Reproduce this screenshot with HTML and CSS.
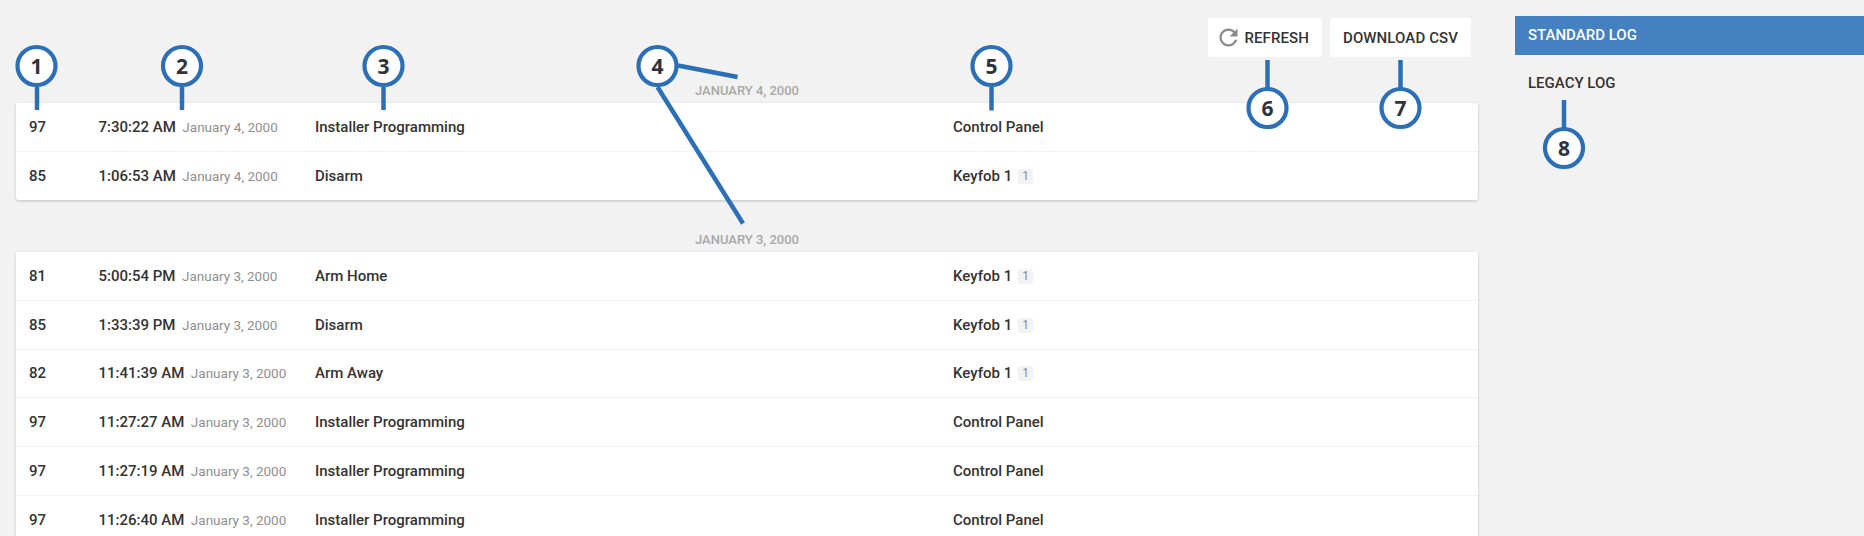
FILE: index.html
```html
<!DOCTYPE html>
<html lang="en">
<head>
<meta charset="utf-8">
<title>Event Log</title>
<link rel="stylesheet" href="styles.css">
</head>
<body>
<div class="page">
  <main class="main">
    <div class="toolbar">
      <button class="btn" type="button">
        <svg class="btn-icon" viewBox="0 0 24 24" aria-hidden="true"><path d="M17.65 6.35C16.2 4.9 14.21 4 12 4c-4.42 0-7.99 3.58-7.99 8s3.57 8 7.99 8c3.73 0 6.84-2.55 7.73-6h-2.08c-.82 2.33-3.04 4-5.65 4-3.31 0-6-2.69-6-6s2.69-6 6-6c1.66 0 3.14.69 4.22 1.78L13 11h7V4l-2.35 2.35z"/></svg>
        Refresh
      </button>
      <button class="btn" type="button">Download CSV</button>
    </div>

    <h2 class="day day-first">January 4, 2000</h2>
    <section class="card">
      <div class="row"><span>97</span><span class="when"><span>7:30:22 AM</span><span class="date">January 4, 2000</span></span><span>Installer Programming</span><span class="source">Control Panel</span></div>
      <div class="row"><span>85</span><span class="when"><span>1:06:53 AM</span><span class="date">January 4, 2000</span></span><span>Disarm</span><span class="source">Keyfob 1<span class="badge">1</span></span></div>
    </section>

    <h2 class="day">January 3, 2000</h2>
    <section class="card">
      <div class="row"><span>81</span><span class="when"><span>5:00:54 PM</span><span class="date">January 3, 2000</span></span><span>Arm Home</span><span class="source">Keyfob 1<span class="badge">1</span></span></div>
      <div class="row"><span>85</span><span class="when"><span>1:33:39 PM</span><span class="date">January 3, 2000</span></span><span>Disarm</span><span class="source">Keyfob 1<span class="badge">1</span></span></div>
      <div class="row"><span>82</span><span class="when"><span>11:41:39 AM</span><span class="date">January 3, 2000</span></span><span>Arm Away</span><span class="source">Keyfob 1<span class="badge">1</span></span></div>
      <div class="row"><span>97</span><span class="when"><span>11:27:27 AM</span><span class="date">January 3, 2000</span></span><span>Installer Programming</span><span class="source">Control Panel</span></div>
      <div class="row"><span>97</span><span class="when"><span>11:27:19 AM</span><span class="date">January 3, 2000</span></span><span>Installer Programming</span><span class="source">Control Panel</span></div>
      <div class="row"><span>97</span><span class="when"><span>11:26:40 AM</span><span class="date">January 3, 2000</span></span><span>Installer Programming</span><span class="source">Control Panel</span></div>
    </section>
  </main>

  <nav class="side">
    <a class="side-item side-active">Standard Log</a>
    <a class="side-item">Legacy Log</a>
  </nav>
</div>

<svg class="callouts" width="1864" height="536" viewBox="0 0 1864 536" aria-hidden="true">
  <g class="leader">
    <line x1="37" y1="87" x2="37" y2="110"/>
    <line x1="182" y1="87" x2="182" y2="110"/>
    <line x1="383.5" y1="87" x2="383.5" y2="110"/>
    <line x1="678" y1="65.5" x2="737.5" y2="77"/>
    <line x1="657.5" y1="87" x2="743" y2="223.5"/>
    <line x1="991.5" y1="87" x2="991.5" y2="110.5"/>
    <line x1="1267.5" y1="60" x2="1267.5" y2="88"/>
    <line x1="1400.5" y1="60" x2="1400.5" y2="88"/>
    <line x1="1564" y1="100" x2="1564" y2="128"/>
  </g>
  <g class="ring">
    <circle cx="36.5" cy="66" r="19"/>
    <circle cx="182" cy="66" r="19"/>
    <circle cx="383.5" cy="66" r="19"/>
    <circle cx="657.5" cy="66" r="19"/>
    <circle cx="991.5" cy="66" r="19"/>
    <circle cx="1267.5" cy="108" r="19"/>
    <circle cx="1400.5" cy="108" r="19"/>
    <circle cx="1564" cy="148" r="19"/>
  </g>
  <g class="num">
    <text x="36.5" y="74">1</text>
    <text x="182" y="74">2</text>
    <text x="383.5" y="74">3</text>
    <text x="657.5" y="74">4</text>
    <text x="991.5" y="74">5</text>
    <text x="1267.5" y="115.5">6</text>
    <text x="1400.5" y="115.5">7</text>
    <text x="1564" y="155.5">8</text>
  </g>
</svg>
</body>
</html>
```

FILE: styles.css
```css
* { box-sizing: border-box; }

html, body {
  margin: 0;
  height: 536px;
  overflow: hidden;
  background: #f2f2f2;
}

body {
  position: relative;
  font-family: Roboto, "Liberation Sans", sans-serif;
  font-size: 15px;
  font-weight: 500;
  color: #333;
}

.page {
  display: flex;
  align-items: flex-start;
  padding-left: 16px;
}

.main {
  width: 1462px;
  flex: none;
}

.toolbar {
  display: flex;
  justify-content: flex-end;
  gap: 8px;
  padding: 18px 7px 0 0;
  height: 57px;
}

.btn {
  display: inline-flex;
  align-items: center;
  height: 39px;
  padding: 0 13px;
  border: 0;
  border-radius: 2px;
  background: #fff;
  color: #333;
  font: 500 15px Roboto, "Liberation Sans", sans-serif;
  letter-spacing: .1px;
  text-transform: uppercase;
}

.btn-icon {
  width: 27px;
  height: 27px;
  margin: 0 2.5px 0 -6px;
  fill: #8a8a8a;
}

.day {
  display: flex;
  align-items: flex-end;
  justify-content: center;
  height: 28px;
  margin: 0;
  padding-bottom: 5px;
  font-size: 13px;
  font-weight: 500;
  line-height: 15px;
  text-transform: uppercase;
  color: #a8a8a8;
}

.day-first { height: 46px; }

.card {
  background: #fff;
  border-radius: 2px;
  box-shadow: 0 1px 3px rgba(0, 0, 0, .2);
}

.card + .day { height: 52px; padding-bottom: 5px; }

.row {
  display: grid;
  grid-template-columns: 69.5px 216.5px 638px 1fr;
  align-items: center;
  height: 48.67px;
  padding-left: 13px;
  border-bottom: 1px solid #f3f3f3;
  white-space: nowrap;
}

.row:last-child { border-bottom: 0; }

.when {
  display: flex;
  align-items: center;
  gap: 6.5px;
}

.date {
  font-size: 13.5px;
  font-weight: 400;
  color: #8f8f8f;
}

.source {
  display: flex;
  align-items: center;
}

.badge {
  width: 15px;
  height: 15px;
  margin: 1px 0 0 6px;
  border-radius: 2px;
  background: #f2f2f2;
  color: #888;
  font-size: 12px;
  font-weight: 400;
  line-height: 15px;
  text-align: center;
}

.side {
  flex: 1;
  display: flex;
  flex-direction: column;
  margin: 16px 0 0 37px;
}

.side-item {
  display: block;
  height: 39px;
  padding-left: 13px;
  line-height: 39px;
  text-transform: uppercase;
  color: #333;
}

.side-item + .side-item { margin-top: 9px; }

.side-active {
  background: #4580c0;
  color: #fff;
}

.callouts {
  position: absolute;
  left: 0;
  top: 0;
  pointer-events: none;
}

.leader line {
  stroke: #2b70b6;
  stroke-width: 4.5;
}

.ring circle {
  fill: #fff;
  stroke: #2b70b6;
  stroke-width: 4.2;
}

.num text {
  font-family: "Open Sans", sans-serif;
  font-size: 21px;
  font-weight: 700;
  text-anchor: middle;
  fill: #2d3440;
}
```
